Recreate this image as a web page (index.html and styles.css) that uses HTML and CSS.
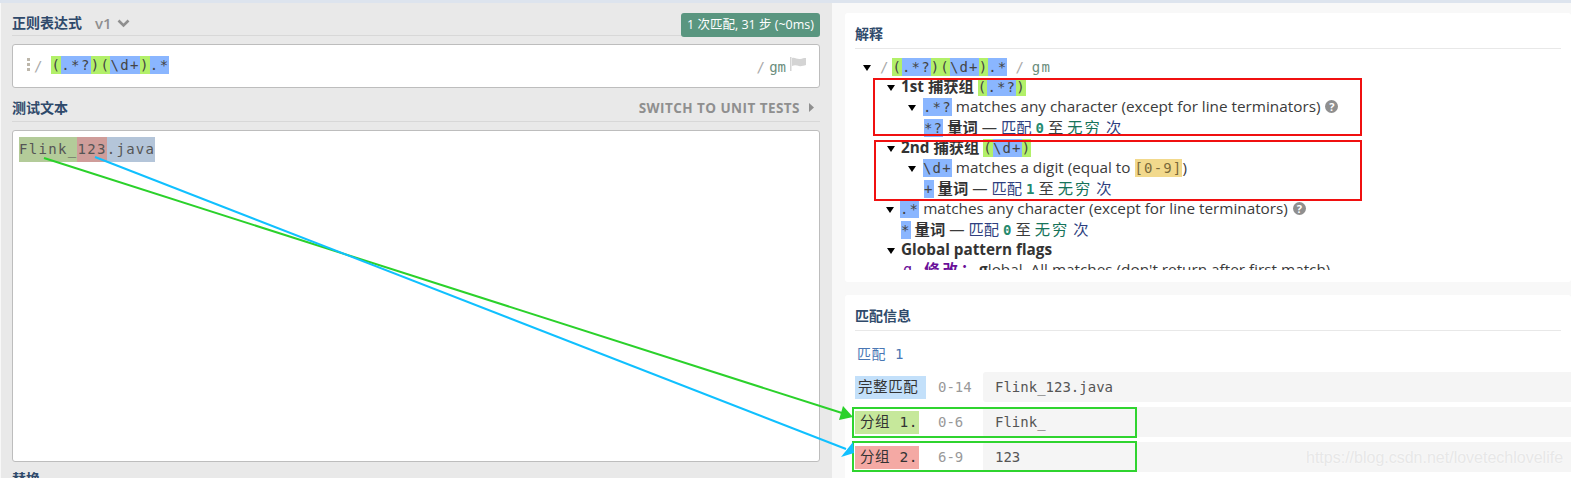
FILE: index.html
```html
<!DOCTYPE html>
<html lang="zh">
<head>
<meta charset="utf-8">
<title>正则表达式</title>
<link rel="stylesheet" href="styles.css">
</head>
<body>
<div class="topline"></div>
<div class="app">
  <section class="left">
    <div class="head first">
      <h2>正则表达式</h2><span class="ver">v1</span>
      <svg class="chev" width="13" height="9" viewBox="0 0 13 9"><path d="M1.5 1.500 6.500 6.500 11.500 1.500" fill="none" stroke="#8f8f8f" stroke-width="2.6"/></svg>
      <span class="badge">1 次匹配, 31 步 (~0ms)</span>
    </div>
    <div class="regex">
      <svg class="dots" width="4" height="14" viewBox="0 0 4 14"><rect width="3" height="3" fill="#bdb7ab"/><rect y="5" width="3" height="3" fill="#bdb7ab"/><rect y="10" width="3" height="3" fill="#bdb7ab"/></svg>
      <span class="slash">/</span>
      <code class="rx"><i class="g">(</i><i class="b">.*?</i><i class="g">)(</i><i class="b">\d+</i><i class="g">)</i><i class="b">.*</i></code>
      <span class="flags"><span class="slash">/</span> <span class="gm">gm</span></span>
      <svg class="flag" width="16" height="14" viewBox="0 0 16 14"><rect width="1.500" height="14" fill="#d4d4d4"/><path d="M2 1C5 0 7 2.500 10 2S13 1 16 1V8C13 9 11 9.500 9 9S5 7.500 2 9Z" fill="#d4d4d4"/></svg>
    </div>
    <div class="head second">
      <h2>测试文本</h2>
      <span class="unit">SWITCH TO UNIT TESTS</span>
      <svg class="caret" width="5" height="9" viewBox="0 0 5 9"><path d="M0 0 5 4.500 0 9Z" fill="#8f8f8f"/></svg>
    </div>
    <div class="test"><code class="t"><i class="m1">Flink_</i><i class="m2">123</i><i class="m3">.java</i></code></div>
    <h2 class="sub">替换</h2>
  </section>
  <section class="right">
    <div class="card explain">
      <h3>解释</h3>
      <div class="tree">
        <div class="ln l0"><span class="tri"></span><span class="sl">/</span> <code class="cd"><i class="g">(</i><i class="b">.*?</i><i class="g">)(</i><i class="b">\d+</i><i class="g">)</i><i class="b">.*</i></code> <span class="sl sl2">/</span> <code class="fl">gm</code></div>
        <div class="ln l1"><span class="tri"></span><b>1st 捕获组</b> <code class="cd"><i class="g">(</i><i class="b">.*?</i><i class="g">)</i></code></div>
        <div class="ln l2"><span class="tri"></span><code class="cd"><i class="b">.*?</i></code> matches any character (except for line terminators) <span class="q">?</span></div>
        <div class="ln l3"><code class="cd"><i class="b">*?</i></code> <b>量词</b> — <span class="nv">匹配</span> <code class="num">0</code> 至 <span class="te">无穷</span> <span class="nv">次</span></div>
        <div class="ln l1"><span class="tri"></span><b>2nd 捕获组</b> <code class="cd"><i class="g">(</i><i class="b">\d+</i><i class="g">)</i></code></div>
        <div class="ln l2"><span class="tri"></span><code class="cd"><i class="b">\d+</i></code> matches a digit (equal to <code class="cd"><i class="y">[0-9]</i></code>)</div>
        <div class="ln l3"><code class="cd"><i class="b">+</i></code> <b>量词</b> — <span class="nv">匹配</span> <code class="num">1</code> 至 <span class="te">无穷</span> <span class="nv">次</span></div>
        <div class="ln l1b"><span class="tri"></span><code class="cd"><i class="b">.*</i></code> matches any character (except for line terminators) <span class="q">?</span></div>
        <div class="ln l2b"><code class="cd"><i class="b">*</i></code> <b>量词</b> — <span class="nv">匹配</span> <code class="num">0</code> 至 <span class="te">无穷</span> <span class="nv">次</span></div>
        <div class="ln l1"><span class="tri"></span><b>Global pattern flags</b></div>
        <div class="ln l2c"><code class="pu">g</code> <b class="pu mod">修改：</b><b>g</b>lobal. All matches (don't return after first match)</div>
      </div>
    </div>
    <div class="card info">
      <h3>匹配信息</h3>
      <div class="mt">匹配 1</div>
      <div class="row"><span class="lab full">完整匹配</span><code class="rng">0-14</code><code class="val">Flink_123.java</code></div>
      <div class="row"><span class="lab g1">分组 1.</span><code class="rng">0-6</code><code class="val">Flink_</code></div>
      <div class="row"><span class="lab g2">分组 2.</span><code class="rng">6-9</code><code class="val">123</code></div>
    </div>
  </section>
</div>
<svg class="marks" width="1571" height="478" viewBox="0 0 1571 478">
  <g fill="none" stroke-width="2">
    <rect x="874" y="79" width="487" height="56" stroke="#f01010"/>
    <rect x="875" y="141" width="486" height="59" stroke="#f01010"/>
    <rect x="853" y="408" width="283" height="29" stroke="#2fd42f"/>
    <rect x="853" y="442" width="283" height="29" stroke="#2fd42f"/>
    <path d="M44 158 842 413" stroke="#2bd12b"/>
    <path d="M95 157 846 449" stroke="#10c0ff"/>
  </g>
  <path d="M853 417 843 406 839 420Z" fill="#2bd12b"/>
  <path d="M854 453 853 442 841 457Z" fill="#10c0ff"/>
</svg>
<div class="wm">https://blog.csdn.net/lovetechlovelife</div>
</body>
</html>
```
FILE: styles.css
```css
* { box-sizing: border-box; }
html, body { margin: 0; height: 100%; overflow: hidden; }
body { background: #f8f8f8; font-family: "Open Sans", "Noto Sans CJK SC", sans-serif; color: #3b3b3b; position: relative; width: 1571px; height: 478px; }
i { font-style: normal; }
code { font-family: "DejaVu Sans Mono", "Noto Sans CJK SC", monospace; }
.topline { height: 3px; background: #dde4ee; }
.app { display: flex; height: 475px; overflow: hidden; }
.left { width: 831px; margin-left: 1px; padding: 0 12px 0 11px; background: #e9e9e9; flex: none; }
.head { display: flex; align-items: center; border-bottom: 1px solid #d8d8d8; height: 33px; }
.head.first { align-items: flex-end; padding-bottom: 3px; }
.head.second { height: 34px; align-items: flex-end; padding-bottom: 4px; }
h2, h3 { margin: 0; font-size: 14px; font-weight: 700; color: #2f4a6b; line-height: 18px; }
.ver { margin-left: 13px; font-size: 15px; font-weight: 600; color: #8f8f8f; line-height: 18px; }
.chev { margin-left: 5px; margin-bottom: 4px; }
.badge { margin-left: auto; width: 139px; text-align: center; background: #5a9680; color: #fff; font-size: 12.5px; height: 24px; line-height: 24px; border-radius: 3px; white-space: nowrap; position: relative; top: 5px; }
.regex { margin-top: 8px; height: 44px; background: #fff; border: 1px solid #bdbdbd; border-radius: 3px; display: flex; align-items: center; padding: 0 13px 0 14px; }
.dots { margin-right: 3px; margin-top: -3px; }
.slash, .sl { color: #a9a9a9; font-family: "DejaVu Sans Mono", monospace; font-size: 14px; }
.slash { margin-right: 9px; }
.rx { font-size: 14px; letter-spacing: 1.4px; color: #444; margin-bottom: 2px; }
.rx i { display: inline-block; line-height: 18px; }
.g { background: #b2f069; }
.b { background: #8ab6ff; }
.y { background: #f2d98c; color: #7a6a3a; }
.flags { margin-left: auto; }
.flags .slash { margin-right: 0; }
.gm { font-family: "DejaVu Sans Mono", monospace; font-size: 14px; color: #6a8d7c; }
.flag { margin-left: 4px; margin-top: -4px; }
.unit { margin-left: auto; font-size: 13.5px; font-weight: 700; letter-spacing: .45px; color: #8f8f8f; }
.caret { margin-left: 9px; margin-right: 6px; margin-bottom: 5px; }
.test { margin-top: 8px; height: 332px; background: #fff; border: 1px solid #bdbdbd; border-radius: 3px; padding: 6px; }
.t { display: block; font-size: 14px; letter-spacing: 1.31px; color: #555; line-height: 25px; }
.t i { display: inline-block; line-height: 25px; }
.m1 { background: #b3cb99; }
.m2 { background: #cf9d9a; }
.m3 { background: #b4c5d9; }
.sub { margin-top: 8px; }
.right { flex: 1; padding: 10px 0 0 13px; min-width: 0; }
.card { background: #fff; padding: 12px 10px 0 10px; border-radius: 3px; }
.card h3 { border-bottom: 1px solid #e8e8e8; height: 24px; line-height: 18px; }
.explain { height: 269px; }
.tree { height: 214.5px; overflow: hidden; margin-top: 6.5px; font-size: 15.3px; }
.ln { height: 20.4px; line-height: 20.4px; white-space: nowrap; }
.ln b { color: #333; font-weight: 700; }
.tri { display: inline-block; vertical-align: 1px; width: 0; height: 0; border: 4.5px solid transparent; border-top: 6px solid #000; border-bottom: 0; margin-right: 7px; }
.l0 { padding-left: 8px; }
.l0 .tri { margin-right: 9px; }
.sl2 { margin: 0 4px; }
.l1 { padding-left: 32px; }
.l1 .tri { margin-right: 6px; }
.l2 { padding-left: 53px; }
.l3 { padding-left: 69px; }
.l1b { padding-left: 31px; }
.l1b .tri { margin-right: 6px; }
.l2b { padding-left: 46px; }
.l2c { padding-left: 48px; }
.cd, .fl { font-size: 14px; letter-spacing: 1.15px; color: #444; }
.cd i { display: inline-block; line-height: 18px; }
.fl { color: #6a8d7c; }
.nv { color: #2f3f80; }
.te { color: #17735a; letter-spacing: 2px; }
.num { font-weight: 700; color: #268a6e; font-size: 14px; }
.pu { color: #6a0f99 !important; }
.mod { letter-spacing: 3px; margin-left: 8px; }
.q { display: inline-block; width: 13px; height: 13px; border-radius: 50%; background: #8f8f8f; color: #fff; font-size: 11px; font-weight: 700; line-height: 13px; text-align: center; margin-left: 1px; vertical-align: 1px; }
.info { margin-top: 13px; height: 190px; }
.mt { margin-top: 13px; margin-left: 2px; font-family: "DejaVu Sans Mono", "Noto Sans CJK SC", monospace; color: #4a77b4; font-size: 14px; line-height: 20px; letter-spacing: .5px; }
.row { display: flex; align-items: center; height: 30px; margin-bottom: 5px; }
.mt + .row { margin-top: 8px; }
.lab { height: 23px; line-height: 23px; font-family: "DejaVu Sans Mono", "Noto Sans CJK SC", monospace; font-size: 14.5px; letter-spacing: .6px; padding-left: 5px; white-space: nowrap; color: #333; flex: none; }
.lab.full { width: 71px; background: #c3e0fa; padding-left: 3px; }
.lab.g1 { width: 64px; background: #c6e89b; }
.lab.g2 { width: 64px; background: #f4a9a4; }
.rng { width: 57px; flex: none; padding-left: 12px; color: #999; font-size: 14px; }
.g1 + .rng, .g2 + .rng { width: 64px; padding-left: 19px; }
.val { flex: 1; align-self: stretch; background: #f5f5f5; line-height: 30px; padding-left: 12px; font-size: 14px; color: #555; margin-right: -10px; border-radius: 3px 0 0 3px; }
.marks { position: absolute; left: 0; top: 0; pointer-events: none; }
.wm { position: absolute; left: 1306px; top: 448px; font-family: "Liberation Sans", sans-serif; font-size: 16px; line-height: 20px; color: #e7e7e7; text-shadow: 0 0 2px #fff; white-space: nowrap; }
```
